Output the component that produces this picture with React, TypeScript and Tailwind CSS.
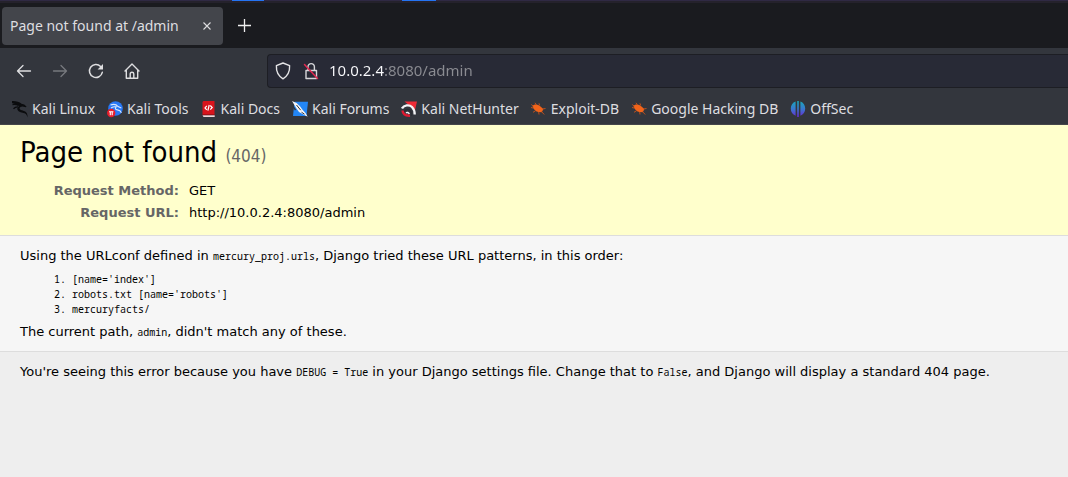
import type { ReactNode } from "react";

function BackIcon() {
  return (
    <svg width="16" height="16" viewBox="0 0 16 16" fill="none" stroke="currentColor" strokeWidth="1.3" strokeLinecap="round" strokeLinejoin="round">
      <path d="M14.500 8H1.500M7 2.500L1.500 8 7 13.500" />
    </svg>
  );
}

function ForwardIcon() {
  return (
    <svg width="16" height="16" viewBox="0 0 16 16" fill="none" stroke="currentColor" strokeWidth="1.3" strokeLinecap="round" strokeLinejoin="round">
      <path d="M1.500 8h13M9 2.500L14.500 8 9 13.500" />
    </svg>
  );
}

function ReloadIcon() {
  return (
    <svg width="16" height="16" viewBox="0 0 16 16" fill="none" stroke="currentColor" strokeWidth="1.5" strokeLinecap="round">
      <path d="M14.300 9.300A6.500 6.500 0 1 1 12.600 3.400" />
      <path d="M15 1v5.400H9.600z" fill="currentColor" stroke="none" />
    </svg>
  );
}

function HomeIcon() {
  return (
    <svg width="16" height="16" viewBox="0 0 16 16" fill="none" stroke="currentColor" strokeWidth="1.4" strokeLinecap="round" strokeLinejoin="round">
      <path d="M1 8L8 1l7 7M2.300 7.200v8h11.400v-8M6.200 15v-4a1.800 1.800 0 0 1 3.600 0v4" />
    </svg>
  );
}

function ShieldIcon() {
  return (
    <svg width="16" height="18" viewBox="0 0 16 18" fill="none" stroke="#e4e4e6" strokeWidth="1.4" strokeLinejoin="round">
      <path d="M8 1l6.600 2.600c.3 5.400-1 9.800-6.600 13.200C2.400 13.400 1.100 9 1.400 3.600z" />
    </svg>
  );
}

function InsecureLockIcon() {
  return (
    <svg width="16" height="18" viewBox="0 0 16 18" fill="none" strokeLinejoin="round">
      <path d="M3 8.500h10.500v8H3zM5 8.500V4.800a3.200 3.200 0 0 1 6.400 0v3.700" stroke="#d6d6d9" strokeWidth="1.400" />
      <path d="M1.500 2.500l13 14" stroke="#e22850" strokeWidth="1.500" strokeLinecap="round" />
    </svg>
  );
}

function KaliIcon() {
  return (
    <svg width="16" height="18" viewBox="0 0 16 18" fill="none">
      <path d="M0 1C3.500.8 7.500 1.600 9.500 3.800l2.700.6 2.300 2-.5.9-3.600-.9C8 6.600 6.800 8 8.200 9.400c2 1.500 5.300.9 6.800 4l.9 4-2-3.300C12.500 12.700 9 13 6.600 11.200 4.500 9.400 5 7.500 7 6 5 4.200 3 4.200 0 3z" fill="#0b0c0e" />
      <path d="M.5 4.500C3 4.200 5 4.600 6.500 5.400M1.500 8.700C3 7 4.500 6.700 6 6.800" stroke="#0b0c0e" strokeWidth="1.300" />
    </svg>
  );
}

function ToolsIcon() {
  return (
    <svg width="16" height="18" viewBox="0 0 16 18" fill="none">
      <circle cx="8.500" cy="8.500" r="7.300" fill="#2777f5" />
      <path d="M3.500 5c3.500-1.200 6-.4 7.500 1.500l3.300 1.400M4 8c2-1.300 3.500-1.600 5.200-1.100-1.600 1.400-.8 2.800 1.200 3 2 .3 3.300 1 4 3" stroke="#d7e7ff" strokeWidth="1.100" />
      <circle cx="4.200" cy="13" r="4.200" fill="#e51d2b" />
      <path d="M2 11.700h4.400M3.300 11.700v3.600M5.200 11.700v3.600" stroke="#fff" strokeWidth="1.100" />
    </svg>
  );
}

function DocsIcon() {
  return (
    <svg width="13" height="18" viewBox="0 0 13 18" fill="none">
      <path d="M1.500 1h11v13.500H.5V2z" fill="#d8141c" />
      <path d="M.5 15.200h12.200v1.800H1.500z" fill="#f2d9da" />
      <path d="M.5 14.600h12" stroke="#a80f16" />
      <path d="M4.800 5.800L3 7.900l1.800 2M8.300 5.500l1.900 2-1.900 2.200M7.200 5l-1.300 5.600" stroke="#fff" strokeWidth="1.200" />
    </svg>
  );
}

function ForumsIcon() {
  return (
    <svg width="16" height="18" viewBox="0 0 16 18" fill="none">
      <path d="M2.500 1.800H16L14.500 16H1z" fill="#2386f5" />
      <path d="M0 1l4.500 2L8 6.200l2.500 3.600 3 3.200 2.200 3.700-4.200-2.200L7 12 4.500 8.600z" fill="#f4f5f7" />
      <path d="M4.500 5l4.200 5.200M9.500 12.200l3 2" stroke="#32343a" strokeWidth="1" />
      <path d="M.3 5l3.200 5.200" stroke="#32343a" strokeWidth="1.400" />
    </svg>
  );
}

function NetHunterIcon() {
  return (
    <svg width="16" height="18" viewBox="0 0 16 18" fill="none">
      <path d="M3.500 1.500H16L13.800 11 9 6z" fill="#ee2b36" />
      <path d="M1 8.500C3 5 8.200 4.300 11 7c2.400 2.400 2.700 4.800 2.700 7.500" stroke="#f3f3f5" strokeWidth="2.400" />
      <path d="M3 12c1-2.800 5-3.500 6.500-1 1 1.700 1.200 3.200 1 4.800" stroke="#2b2d33" strokeWidth="1.500" />
      <path d="M1.500 10.500c.3 3.500 3 5.400 7.500 5.200" stroke="#df1930" strokeWidth="2.400" />
      <path d="M5 12.800c1-.7 2.500-.4 3.300 1.200" stroke="#f3f3f5" strokeWidth="1.600" />
    </svg>
  );
}

function ExploitIcon() {
  return (
    <svg width="15" height="14" viewBox="0 0 15 14" fill="none">
      <path d="M1.500 4C4 1.500 7 2.300 9.500 4.600l2.800 2.300-.7 1.800-.8 1.500-3.300-.2C5 9.800 2.500 7.800 1.500 4z" fill="#f2641a" />
      <path d="M0 5.500l2.500.6M4 .8l1.500 2M8 1.300l.6 2.200M14.500 6.500L11.500 7M13.200 12.500L10.500 9.500M8 12.500l-.3-2.500M2 10.300l2.500-1.500M.3 2.500l2 1.800" stroke="#c9531b" strokeWidth=".9" />
    </svg>
  );
}

function OffSecIcon() {
  return (
    <svg width="16" height="18" viewBox="0 0 16 18" fill="none">
      <defs>
        <linearGradient id="offsec" x1="0" y1="0" x2="0" y2="1">
          <stop offset="0" stopColor="#18a8b8" />
          <stop offset=".5" stopColor="#3978d0" />
          <stop offset="1" stopColor="#6927d4" />
        </linearGradient>
      </defs>
      <path d="M5.600 1.400v14.400C2.500 14.500.8 12 .8 8.500S2.500 2.600 5.600 1.400zM7.200 1h1.600v16H7.200zM10.400 1.400c3.100 1.200 4.800 3.600 4.800 7.100s-1.700 6-4.800 7.300z" fill="url(#offsec)" />
    </svg>
  );
}

const bookmarks: { label: string; icon: ReactNode }[] = [
  { label: "Kali Linux", icon: <KaliIcon /> },
  { label: "Kali Tools", icon: <ToolsIcon /> },
  { label: "Kali Docs", icon: <DocsIcon /> },
  { label: "Kali Forums", icon: <ForumsIcon /> },
  { label: "Kali NetHunter", icon: <NetHunterIcon /> },
  { label: "Exploit-DB", icon: <ExploitIcon /> },
  { label: "Google Hacking DB", icon: <ExploitIcon /> },
  { label: "OffSec", icon: <OffSecIcon /> },
];

function Code({ children }: { children: ReactNode }) {
  return <code className="font-['Noto_Sans_Mono','DejaVu_Sans_Mono',monospace] text-[10px]">{children}</code>;
}

function BrowserChrome() {
  return (
    <header className="font-['Noto_Sans',sans-serif] text-sm text-[#dedee0]">
      <div className="flex h-[3px] border-b-2 border-[#25222c] bg-[#2f2943]">
        <span className="ml-[232px] h-px w-8 bg-[#2474f2]" />
        <span className="ml-[138px] h-px w-[34px] bg-[#2474f2]" />
      </div>
      <div className="flex h-[45px] items-center bg-[#1a1b1f] px-0.5">
        <div className="flex h-[38px] w-[221px] items-center justify-between rounded bg-[#43454b] px-2">
          <span className="whitespace-nowrap">Page not found at /admin</span>
          <button aria-label="Close tab" className="grid size-4 place-items-center">
            <svg width="8" height="8" viewBox="0 0 8 8" stroke="currentColor" strokeWidth="1.100">
              <path d="M.5.5l7 7M7.500.5l-7 7" />
            </svg>
          </button>
        </div>
        <button aria-label="New tab" className="ml-[11px] grid size-5 place-items-center">
          <svg width="13" height="13" viewBox="0 0 13 13" stroke="#f0f0f0" strokeWidth="1.300">
            <path d="M6.500 0v13M0 6.500h13" />
          </svg>
        </button>
      </div>
      <div className="border-b border-[#45464a] bg-[#33363d]">
        <div className="flex h-[45px] items-center pl-4">
          <nav aria-label="Navigation" className="flex w-[251px] gap-5">
            <button aria-label="Back"><BackIcon /></button>
            <button aria-label="Forward" className="text-[#77797e]"><ForwardIcon /></button>
            <button aria-label="Reload"><ReloadIcon /></button>
            <button aria-label="Home"><HomeIcon /></button>
          </nav>
          <div className="flex h-[34px] flex-1 items-center gap-3 rounded-l border border-r-0 border-[#1d1e24] bg-[#282a36] pl-[7px]">
            <ShieldIcon />
            <InsecureLockIcon />
            <input
              type="text"
              aria-label="Address"
              defaultValue="10.0.2.4:8080/admin"
              className="-ml-0.5 min-w-0 flex-1 bg-[linear-gradient(to_right,#fbfbfe_55px,#8b8c92_55px)] bg-clip-text text-[15px] text-transparent outline-none"
            />
          </div>
        </div>
        <nav aria-label="Bookmarks" className="flex h-[31px] items-center gap-3 pl-3 whitespace-nowrap">
          {bookmarks.map((b) => (
            <a key={b.label} href="#" className="flex items-center gap-1">
              <span className="flex w-4 justify-center">{b.icon}</span>
              {b.label}
            </a>
          ))}
        </nav>
      </div>
    </header>
  );
}

export default function App() {
  return (
    <div className="flex min-h-screen flex-col bg-[#eeeeee]">
      <BrowserChrome />
      <main className="font-['DejaVu_Sans',sans-serif] text-[13px] leading-[16px] text-black">
        <section className="border-b border-[#dddddd] bg-[#ffffcc] px-5 pt-2.5 pb-[11px]">
          <h1 className="mb-[7px] font-['DejaVu_Sans_Condensed','DejaVu_Sans',sans-serif] text-[29px] leading-[34px]">
            Page not found <span className="text-[17px] text-[#666666]">(404)</span>
          </h1>
          <table className="leading-[22px]">
            <tbody>
              <tr>
                <th scope="row" className="w-[159px] text-right font-bold text-[#666666]">Request Method:</th>
                <td className="pl-2.5">GET</td>
              </tr>
              <tr>
                <th scope="row" className="text-right font-bold text-[#666666]">Request URL:</th>
                <td className="pl-2.5">http://10.0.2.4:8080/admin</td>
              </tr>
            </tbody>
          </table>
        </section>
        <section className="border-b border-[#dddddd] bg-[#f6f6f6] px-5 pt-3 pb-[11px]">
          <p>Using the URLconf defined in <Code>mercury_proj.urls</Code>, Django tried these URL patterns, in this order:</p>
          <ol className="mt-2 mb-[7px] ml-[52px] list-decimal font-['Noto_Sans_Mono','DejaVu_Sans_Mono',monospace] text-[10px] leading-[15px]">
            <li>[name='index']</li>
            <li>robots.txt [name='robots']</li>
            <li>mercuryfacts/</li>
          </ol>
          <p>The current path, <Code>admin</Code>, didn't match any of these.</p>
        </section>
        <section className="px-5 py-3">
          <p>
            You're seeing this error because you have <Code>DEBUG = True</Code> in your Django settings file. Change that to <Code>False</Code>, and Django will display a standard 404 page.
          </p>
        </section>
      </main>
    </div>
  );
}
